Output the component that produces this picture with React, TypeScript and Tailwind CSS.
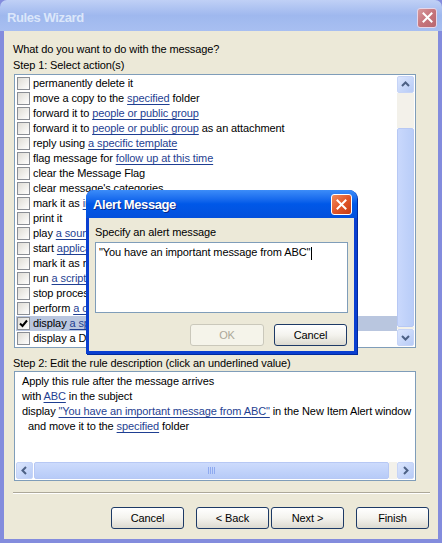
import React from "react";

type Row = { pre: string; link?: string; post?: string; checked?: boolean };

const rows: Row[] = [
  { pre: "permanently delete it" },
  { pre: "move a copy to the ", link: "specified", post: " folder" },
  { pre: "forward it to ", link: "people or public group" },
  { pre: "forward it to ", link: "people or public group", post: " as an attachment" },
  { pre: "reply using ", link: "a specific template" },
  { pre: "flag message for ", link: "follow up at this time" },
  { pre: "clear the Message Flag" },
  { pre: "clear message's categories" },
  { pre: "mark it as ", link: "importance" },
  { pre: "print it" },
  { pre: "play ", link: "a sound" },
  { pre: "start ", link: "application" },
  { pre: "mark it as read" },
  { pre: "run ", link: "a script" },
  { pre: "stop processing more rules" },
  { pre: "perform ", link: "a custom action" },
  { pre: "display ", link: "a specific message", post: " in the New Item Alert window", checked: true },
  { pre: "display a Desktop Alert" },
];

function Link({ children }: { children: React.ReactNode }) {
  return <span className="text-[#1f3f92] underline underline-offset-[2px]">{children}</span>;
}

function CloseX({ active }: { active?: boolean }) {
  return (
    <div
      className={
        active
          ? "w-[21px] h-[21px] rounded-[3px] border border-white bg-gradient-to-br from-[#f08a5c] via-[#e2572a] to-[#c63b12] flex items-center justify-center"
          : "w-[20px] h-[20px] rounded-[3px] border border-[#e6d6e8] bg-gradient-to-br from-[#d69a9e] via-[#c6747c] to-[#b8676f] flex items-center justify-center"
      }
    >
      <svg width="11" height="11" viewBox="0 0 11 11">
        <path d="M1.5 1.5 L9.5 9.5 M9.5 1.5 L1.5 9.5" stroke="white" strokeWidth="2" strokeLinecap="square" />
      </svg>
    </div>
  );
}

function Checkbox({ checked }: { checked?: boolean }) {
  return (
    <div className="w-[13px] h-[13px] border border-[#8a8e95] bg-gradient-to-br from-[#dedcd5] to-white flex items-center justify-center shrink-0">
      {checked && (
        <svg width="9" height="9" viewBox="0 0 9 9">
          <path d="M1 4.5 L3.5 7 L8 1.5" stroke="black" strokeWidth="2" fill="none" />
        </svg>
      )}
    </div>
  );
}

function Arrow({ dir }: { dir: "up" | "down" | "left" | "right" }) {
  const d = {
    up: "M2 7 L5.5 3.5 L9 7",
    down: "M2 4 L5.5 7.5 L9 4",
    left: "M7 2 L3.5 5.5 L7 9",
    right: "M4 2 L7.5 5.5 L4 9",
  }[dir];
  return (
    <div className="w-[17px] h-[17px] rounded-[2px] border border-[#c6d4f7] bg-gradient-to-br from-[#dce6fd] to-[#b7cbf6] flex items-center justify-center shrink-0">
      <svg width="11" height="11" viewBox="0 0 11 11">
        <path d={d} stroke="#4d6185" strokeWidth="2" fill="none" />
      </svg>
    </div>
  );
}

function XpButton({ children, disabled }: { children: React.ReactNode; disabled?: boolean }) {
  return (
    <div
      className={
        disabled
          ? "w-[74px] h-[22px] rounded-[3px] border border-[#cac8bb] bg-[#f5f4ea] text-[#aca899] flex items-center justify-center"
          : "w-[73px] h-[22px] rounded-[3px] border border-[#1d3a66] bg-gradient-to-b from-white via-[#f4f3ee] to-[#dcdad0] text-black flex items-center justify-center"
      }
    >
      {children}
    </div>
  );
}

export default function App() {
  return (
    <div className="relative w-[442px] h-[543px] flex flex-col bg-[#838cdd] font-['Liberation_Sans',sans-serif] text-[11px] tracking-[-0.1px] text-black overflow-hidden">
      {/* title bar (inactive) */}
      <div className="h-[31px] shrink-0 rounded-t-[7px] bg-gradient-to-b from-[#c0d0f6] via-[#9fb8ee] to-[#a8bff1] flex items-center justify-between pl-[7px] pr-[5px] pt-[4px]">
        <span className="font-bold text-[13px] text-[#dbe6fa] tracking-[-0.4px]">Rules Wizard</span>
        <CloseX />
      </div>

      {/* body */}
      <div className="flex-1 mx-[4px] mb-[4px] bg-[#ece9d8] flex flex-col pt-[10px] pl-[9px] pr-[8px] leading-[16px]">
        <div>What do you want to do with the message?</div>
        <div>Step 1: Select action(s)</div>

        <div className="mt-[1px] mr-[14px] ml-px h-[274px] border border-[#7f9db9] bg-white p-px flex">
          <div className="flex-1 flex flex-col">
            {rows.map((r, i) => (
              <div
                key={i}
                className={
                  "h-[15px] flex items-center gap-[3px] pl-px whitespace-nowrap leading-[15px] " +
                  (r.checked ? "bg-[#b9c6df]" : "")
                }
              >
                <Checkbox checked={r.checked} />
                <span>
                  {r.pre}
                  {r.link && <Link>{r.link}</Link>}
                  {r.post}
                </span>
              </div>
            ))}
          </div>
          <div className="w-[17px] flex flex-col">
            <Arrow dir="up" />
            <div className="h-[35px] bg-[#f3f1ea]" />
            <div className="h-[199px] rounded-[2px] border border-[#b7c8f4] bg-gradient-to-r from-[#c9d8fc] to-[#b9cdf8]" />
            <div className="h-[2px] bg-[#f3f1ea]" />
            <Arrow dir="down" />
          </div>
        </div>

        <div className="mt-[7px]">Step 2: Edit the rule description (click an underlined value)</div>

        <div className="mr-[14px] ml-px h-[110px] border border-[#7f9db9] bg-white p-px flex flex-col">
          <div className="flex-1 pl-[6px] pt-px leading-[15px] whitespace-nowrap">
            <div>Apply this rule after the message arrives</div>
            <div>
              with <Link>ABC</Link> in the subject
            </div>
            <div>
              display <Link>"You have an important message from ABC"</Link> in the New Item Alert window
            </div>
            <div className="pl-[6px]">
              and move it to the <Link>specified</Link> folder
            </div>
          </div>
          <div className="h-[17px] flex">
            <Arrow dir="left" />
            <div className="w-[355px] ml-px rounded-[2px] border border-[#b7c8f4] bg-gradient-to-b from-[#cddbfc] to-[#b7cbf8] flex items-center justify-center">
              <svg width="8" height="7" viewBox="0 0 8 7">
                <path d="M0.5 0 V7 M2.5 0 V7 M4.5 0 V7 M6.5 0 V7" stroke="#8faaf0" strokeWidth="1" />
              </svg>
            </div>
            <div className="flex-1 bg-[#f3f1ea]" />
            <Arrow dir="right" />
          </div>
        </div>

        <div className="mt-[11px] h-[2px] border-t border-[#aca899] border-b border-b-white" />

        <div className="mt-[13px] flex items-center">
          <div className="ml-[98px]">
            <XpButton>Cancel</XpButton>
          </div>
          <div className="ml-[12px]">
            <XpButton>&lt; Back</XpButton>
          </div>
          <div className="ml-[2px]">
            <XpButton>Next &gt;</XpButton>
          </div>
          <div className="ml-[12px]">
            <XpButton>Finish</XpButton>
          </div>
        </div>
      </div>

      {/* Alert Message dialog (active, on top) */}
      <div className="absolute left-[86px] top-[190px] w-[271px] h-[164px] rounded-t-[8px] bg-[#0a3fd0] flex flex-col shadow-[1px_1px_0_#002a9e]">
        <div className="h-[28px] shrink-0 rounded-t-[8px] bg-gradient-to-b from-[#3c8cf8] via-[#0058e8] to-[#0350dc] flex items-center justify-between pl-[7px] pr-[5px] pt-px">
          <span className="font-bold text-[13px] text-white tracking-[-0.4px] [text-shadow:1px_1px_0_#0a2a8a]">Alert Message</span>
          <CloseX active />
        </div>
        <div className="flex-1 mx-[3px] mb-[3px] bg-[#ece9d8] flex flex-col pt-[6px] px-[6px]">
          <div className="leading-[16px]">Specify an alert message</div>
          <div className="mt-[2px] h-[71px] border border-[#7f9db9] bg-white pl-[3px] pt-[2px] leading-[14px]">
            <span>"You have an important message from ABC"</span>
            <span className="inline-block w-px h-[13px] bg-black align-middle ml-px" />
          </div>
          <div className="mt-[11px] flex justify-end gap-[10px] pr-px">
            <XpButton disabled>OK</XpButton>
            <XpButton>Cancel</XpButton>
          </div>
        </div>
      </div>
    </div>
  );
}
